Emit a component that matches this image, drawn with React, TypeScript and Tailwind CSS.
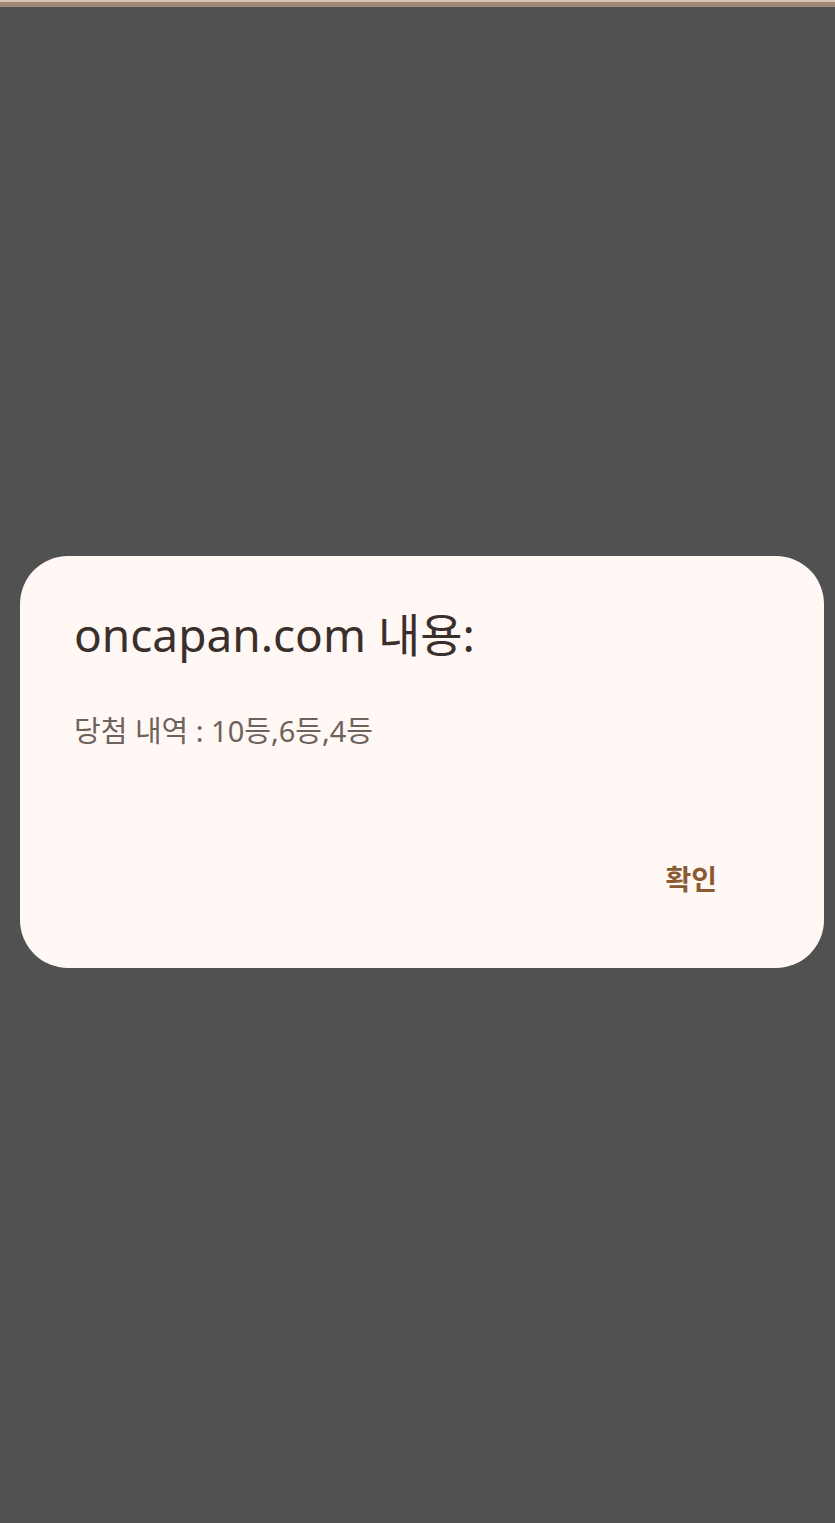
import React from "react";

// Browser alert() style dialog over a dimmed page

function App() {
  return (
    <div
      className="flex h-screen w-full flex-col bg-[#515151]"
      style={{ fontFamily: '"Noto Sans", "Noto Sans CJK KR", sans-serif' }}
    >
      <div className="h-[7px] w-full border-t-2 border-[#d9c5b5] bg-[#a08a7a]" />
      <div className="flex flex-1 items-center pb-[7px] pl-[20px] pr-[11px]">
        <div className="h-[412px] w-full rounded-[48px] bg-[#fff8f5] pl-[54px] pr-[107px] pt-[50px]">
          <h1 className="text-[46px] leading-[56px] text-[#3a2f2a]">oncapan.com 내용:</h1>
          <p className="mt-[50px] text-[29px] leading-[38px] text-[#6e625c]">
            당첨 내역 : 10등,6등,4등
          </p>
          <div className="mt-[111px] flex justify-end">
            <button className="text-[28px] font-bold leading-[36px] text-[#8a5a30]">확인</button>
          </div>
        </div>
      </div>
    </div>
  );
}

export default App;
